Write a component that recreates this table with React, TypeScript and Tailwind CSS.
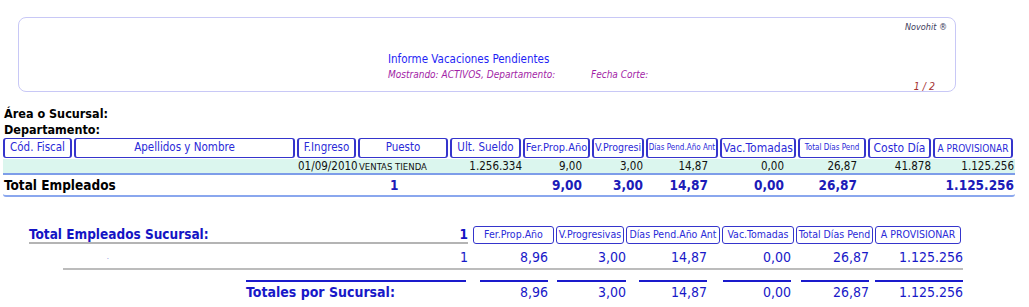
import React from "react";

const cols = "grid grid-cols-[71px_223px_61px_92px_73px_69px_54px_74px_78px_70px_65px_82px]";
const sucCols = "grid grid-cols-[444px_83px_70px_96px_74px_79px_88px]";

const headers: { label: string; cls: string }[] = [
  { label: "Cód. Fiscal", cls: "text-[11.5px]" },
  { label: "Apellidos y Nombre", cls: "text-[11.5px]" },
  { label: "F.Ingreso", cls: "text-[11.5px]" },
  { label: "Puesto", cls: "text-[11.5px]" },
  { label: "Ult. Sueldo", cls: "text-[11.5px]" },
  { label: "Fer.Prop.Año", cls: "text-[11px]" },
  { label: "V.Progresi", cls: "text-[10.5px]" },
  { label: "Días Pend.Año Ant", cls: "text-[8px]" },
  { label: "Vac.Tomadas", cls: "text-[12px]" },
  { label: "Total Días Pend", cls: "text-[8px]" },
  { label: "Costo Día", cls: "text-[12px]" },
  { label: "A PROVISIONAR", cls: "text-[10px]" },
];

const sucHeaders = ["Fer.Prop.Año", "V.Progresivas", "Días Pend.Año Ant", "Vac.Tomadas", "Total Días Pend", "A PROVISIONAR"];

function HeadCell({ children, className = "" }: { children: React.ReactNode; className?: string }) {
  return (
    <div
      className={`mr-[2px] flex items-center justify-center overflow-hidden whitespace-nowrap rounded-[3px] border border-[#3535cc] bg-white text-[#2a2ad8] ${className}`}
    >
      {children}
    </div>
  );
}

export default function App() {
  return (
    <div className="h-[307px] w-[1029px] overflow-hidden bg-white font-['DejaVu_Sans_Condensed','DejaVu_Sans',sans-serif] text-black">
      {/* Report header */}
      <div className="ml-[18px] mt-[17px] h-[75px] w-[938px] rounded-[8px] border border-[#c8c8f6]">
        <div className="flex justify-end pr-[8px] pt-[3px] text-[9px] italic text-[#3c3c5c]">Novohit ®</div>
        <div className="ml-[369px] mt-[17px] text-[11.5px] leading-[15px] text-[#1f1ff5]">Informe Vacaciones Pendientes</div>
        <div className="ml-[369px] flex text-[10px] italic leading-[15px] text-[#a21ea6]">
          <span className="w-[203px]">Mostrando: ACTIVOS, Departamento:</span>
          <span>Fecha Corte:</span>
        </div>
        <div className="-mt-[1px] flex justify-end pr-[20px] text-[10.5px] italic leading-[10px] text-[#a33030]">1 / 2</div>
      </div>

      {/* Area / Depto */}
      <div className="ml-[4px] mt-[13px] text-[12.5px] font-bold leading-[17px]">Área o Sucursal:</div>
      <div className="ml-[4px] text-[12.5px] font-bold leading-[16px]">Departamento:</div>

      {/* Table header */}
      <div className={`${cols} ml-[3px] h-[20px]`}>
        {headers.map((h) => (
          <HeadCell key={h.label} className={`border-l-2 border-r-2 ${h.cls}`}>
            {h.label}
          </HeadCell>
        ))}
      </div>

      {/* Data row */}
      <div className={`${cols} ml-[3px] mt-[1px] h-[16px] w-[1012px] border-b-2 border-[#7d9de9] bg-[#dbf6ee] text-[11.5px] leading-[14px] text-[#111]`}>
        <div />
        <div />
        <div className="whitespace-nowrap pl-[1px]">01/09/2010</div>
        <div className="whitespace-nowrap pl-[1px] pt-[1px] text-[9.5px]">VENTAS TIENDA</div>
        <div className="pr-[1px] text-right">1.256.334</div>
        <div className="pr-[10px] text-right">9,00</div>
        <div className="pr-[3px] text-right">3,00</div>
        <div className="pr-[12px] text-right">14,87</div>
        <div className="pr-[14px] text-right">0,00</div>
        <div className="pr-[11px] text-right">26,87</div>
        <div className="pr-[2px] text-right">41.878</div>
        <div className="pr-[1px] text-right">1.125.256</div>
      </div>

      {/* Total Empleados */}
      <div className={`${cols} ml-[3px] h-[22px] w-[1012px] rounded-b-[3px] border-b-2 border-[#8aa7ee] text-[13.5px] font-bold leading-[20px] text-[#1c1cb8]`}>
        <div className="col-span-2 whitespace-nowrap pl-[1px] text-black">Total Empleados</div>
        <div />
        <div className="pl-[32px]">1</div>
        <div />
        <div className="pr-[10px] text-right">9,00</div>
        <div className="pr-[3px] text-right">3,00</div>
        <div className="pr-[12px] text-right">14,87</div>
        <div className="pr-[14px] text-right">0,00</div>
        <div className="pr-[11px] text-right">26,87</div>
        <div />
        <div className="pr-[1px] text-right">1.125.256</div>
      </div>

      {/* Sucursal totals */}
      <div className={`${sucCols} ml-[29px] mt-[29px] h-[18px]`}>
        <div className="mr-[5px] flex items-center justify-between border-b-2 border-[#b4b4b4] text-[13.5px] font-bold leading-[16px] text-[#1414c4]">
          <span>Total Empleados Sucursal:</span>
          <span>1</span>
        </div>
        {sucHeaders.map((h) => (
          <HeadCell key={h} className="text-[10.5px]">
            {h}
          </HeadCell>
        ))}
      </div>

      <div className={`${sucCols} ml-[29px] mt-[4px] h-[20px] w-[934px] text-[14px] leading-[18px] text-[#1818c8]`}>
        <div className="ml-[34px] mr-[5px] flex items-start justify-between">
          <span className="ml-[44px] text-[6px] leading-[18px]">.</span>
          <span>1</span>
        </div>
        <div className="pr-[8px] text-right">8,96</div>
        <div className="text-right">3,00</div>
        <div className="pr-[15px] text-right">14,87</div>
        <div className="pr-[5px] text-right">0,00</div>
        <div className="pr-[6px] text-right">26,87</div>
        <div className="text-right">1.125.256</div>
      </div>
      <div className="ml-[63px] h-[2px] w-[900px] bg-[#bcbcbc]" />

      <div className={`${sucCols} ml-[29px] mt-[10px] text-[14px] leading-[18px] text-[#1818c8]`}>
        <div className="ml-[217px] mr-[7px] border-t-2 border-[#1a1acc] pt-[1px] font-bold">Totales por Sucursal:</div>
        <div className="ml-[7px] mr-[8px] border-t-2 border-[#1a1acc] pt-[1px] text-right">8,96</div>
        <div className="ml-[1px] border-t-2 border-[#1a1acc] pt-[1px] text-right">3,00</div>
        <div className="ml-[13px] mr-[15px] border-t-2 border-[#1a1acc] pt-[1px] text-right">14,87</div>
        <div className="ml-[1px] mr-[5px] border-t-2 border-[#1a1acc] pt-[1px] text-right">0,00</div>
        <div className="ml-[5px] mr-[6px] border-t-2 border-[#1a1acc] pt-[1px] text-right">26,87</div>
        <div className="border-t-2 border-[#1a1acc] pt-[1px] text-right">1.125.256</div>
      </div>
    </div>
  );
}
